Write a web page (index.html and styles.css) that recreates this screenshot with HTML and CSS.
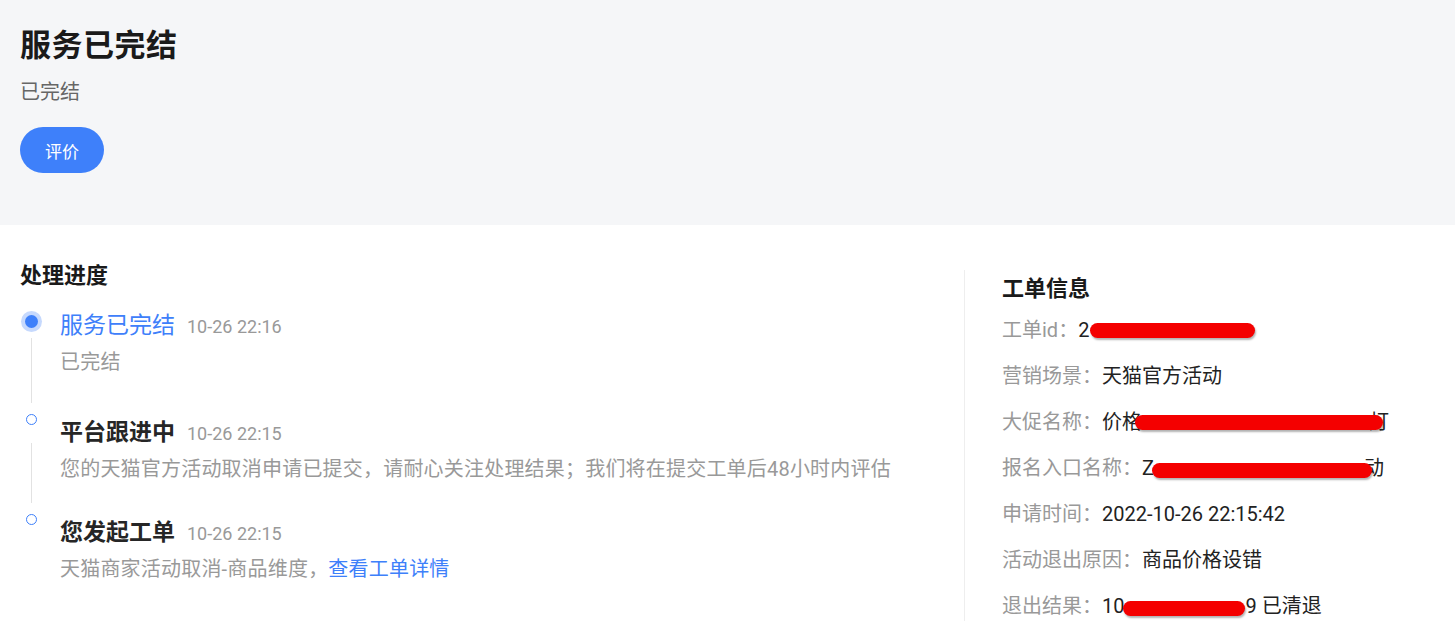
FILE: index.html
```html
<!DOCTYPE html>
<html lang="zh-CN">
  <head>
    <meta charset="UTF-8" />
    <meta name="viewport" content="width=device-width, initial-scale=1.0" />
    <title>服务已完结</title>
    <link rel="stylesheet" href="styles.css">
  </head>
  <body>
    <header class="status">
      <h1 class="status-title">服务已完结</h1>
      <p class="status-desc">已完结</p>
      <button class="btn">评价</button>
    </header>

    <main class="main">
      <section class="progress">
        <h3 class="section-title">处理进度</h3>
        <ul class="timeline">
          <li class="tl-item tl-first">
            <div class="tl-axis">
              <span class="dot dot-active"></span>
              <span class="tl-line"></span>
            </div>
            <div class="tl-body">
              <div class="tl-head"><span class="tl-title active">服务已完结</span><span class="tl-time">10-26 22:16</span></div>
              <p class="tl-desc">已完结</p>
            </div>
          </li>
          <li class="tl-item">
            <div class="tl-axis">
              <span class="dot"></span>
              <span class="tl-line"></span>
            </div>
            <div class="tl-body">
              <div class="tl-head"><span class="tl-title">平台跟进中</span><span class="tl-time">10-26 22:15</span></div>
              <p class="tl-desc">您的天猫官方活动取消申请已提交，请耐心关注处理结果；我们将在提交工单后48小时内评估</p>
            </div>
          </li>
          <li class="tl-item">
            <div class="tl-axis">
              <span class="dot"></span>
            </div>
            <div class="tl-body">
              <div class="tl-head"><span class="tl-title">您发起工单</span><span class="tl-time">10-26 22:15</span></div>
              <p class="tl-desc">天猫商家活动取消-商品维度，<a class="link" href="#">查看工单详情</a></p>
            </div>
          </li>
        </ul>
      </section>

      <aside class="info">
        <h3 class="section-title">工单信息</h3>
        <ul class="info-list">
          <li><span class="label">工单id：</span><span class="value">2<span class="redact r-id">0000000000000</span></span></li>
          <li><span class="label">营销场景：</span><span class="value">天猫官方活动</span></li>
          <li><span class="label">大促名称：</span><span class="value">价格<span class="redact r-promo">0000000000</span>灯</span></li>
          <li><span class="label">报名入口名称：</span><span class="value">Z<span class="redact r-entry">0000000000</span>动</span></li>
          <li><span class="label">申请时间：</span><span class="value">2022-10-26 22:15:42</span></li>
          <li><span class="label">活动退出原因：</span><span class="value">商品价格设错</span></li>
          <li><span class="label">退出结果：</span><span class="value">10<span class="redact r-result">000000000</span>9 已清退</span></li>
        </ul>
      </aside>
    </main>
  </body>
</html>
```

FILE: styles.css
```css
* {
  margin: 0;
  padding: 0;
  outline: 0;
  box-sizing: border-box;
  font-family: Roboto, 'Noto Sans CJK SC', sans-serif;
}
body {
  width: 100%;
  height: 629px;
  overflow: hidden;
  background: #fff;
  color: #222;
}
ul {
  list-style: none;
}
.status {
  height: 225px;
  padding: 26px 20px 0;
  background: #f5f6f8;
}
.status-title {
  font-size: 31px;
  line-height: 40px;
  font-weight: 700;
  letter-spacing: 0.5px;
  color: #1a1a1a;
}
.status-desc {
  margin-top: 12px;
  font-size: 20px;
  line-height: 28px;
  color: #666;
}
.btn {
  margin-top: 21px;
  width: 84px;
  height: 46px;
  border: none;
  border-radius: 23px;
  font-size: 17px;
  color: #fff;
  background: #3e80fa;
  cursor: pointer;
}
.main {
  display: flex;
  align-items: stretch;
  padding-top: 36px;
}
.progress {
  flex: 1;
  padding-left: 20px;
}
.section-title {
  font-size: 22px;
  line-height: 30px;
  font-weight: 700;
  color: #1a1a1a;
}
.timeline {
  margin-top: 19px;
}
.tl-item {
  display: flex;
  padding-bottom: 33px;
}
.tl-item.tl-first {
  padding-bottom: 40px;
}
.tl-axis {
  width: 23px;
  margin-right: 17px;
  display: flex;
  flex-direction: column;
  align-items: center;
  margin-bottom: -33px;
}
.tl-first .tl-axis {
  margin-bottom: -40px;
}
.dot {
  flex: none;
  width: 11px;
  height: 11px;
  margin-top: -3px;
  border: 1.5px solid #3e80fa;
  border-radius: 50%;
  background: #fff;
}
.dot.dot-active {
  width: 13px;
  height: 13px;
  margin-top: 5px;
  border: none;
  background: #3e80fa;
  box-shadow: 0 0 0 4px #c6d9fd;
}
.tl-line {
  flex: 1;
  width: 1px;
  margin: 18px 0 14px;
  background: #e2e2e2;
}
.tl-first .tl-line {
  margin-top: 10px;
}
.tl-head {
  display: flex;
  align-items: baseline;
  line-height: 32px;
}
.tl-title {
  font-size: 23px;
  font-weight: 700;
  color: #262626;
}
.tl-title.active {
  font-weight: 400;
  color: #3e80fa;
}
.tl-time {
  margin-left: 12px;
  font-size: 18px;
  color: #999;
}
.tl-desc {
  margin-top: 4px;
  font-size: 20px;
  line-height: 30px;
  letter-spacing: 0.2px;
  color: #999;
}
.link {
  color: #3e80fa;
  text-decoration: none;
}
.info {
  width: 491px;
  margin-top: 9px;
  padding: 4px 0 0 37px;
  border-left: 1px solid #eeeeee;
}
.info-list {
  margin-top: 11px;
}
.info-list li {
  font-size: 20px;
  line-height: 30px;
  white-space: nowrap;
}
.info-list li + li {
  margin-top: 16px;
}
.label {
  color: #999;
}
.value {
  color: #222;
}
.redact {
  position: relative;
  z-index: 1;
  display: inline-block;
  height: 15px;
  vertical-align: -1px;
  border-radius: 8px;
  background: #f40000;
  color: transparent;
  overflow: hidden;
  box-shadow: 1px 2px 2px rgba(0, 0, 0, 0.3);
}
.r-id {
  width: 165px;
  margin-left: 1px;
}
.r-promo {
  width: 248px;
  margin-left: -7px;
  margin-right: -14px;
}
.r-entry {
  width: 220px;
  margin-left: -2px;
  margin-right: -8px;
  vertical-align: -3px;
}
.r-result {
  width: 122px;
  margin-left: -1px;
  vertical-align: -3px;
}
```
